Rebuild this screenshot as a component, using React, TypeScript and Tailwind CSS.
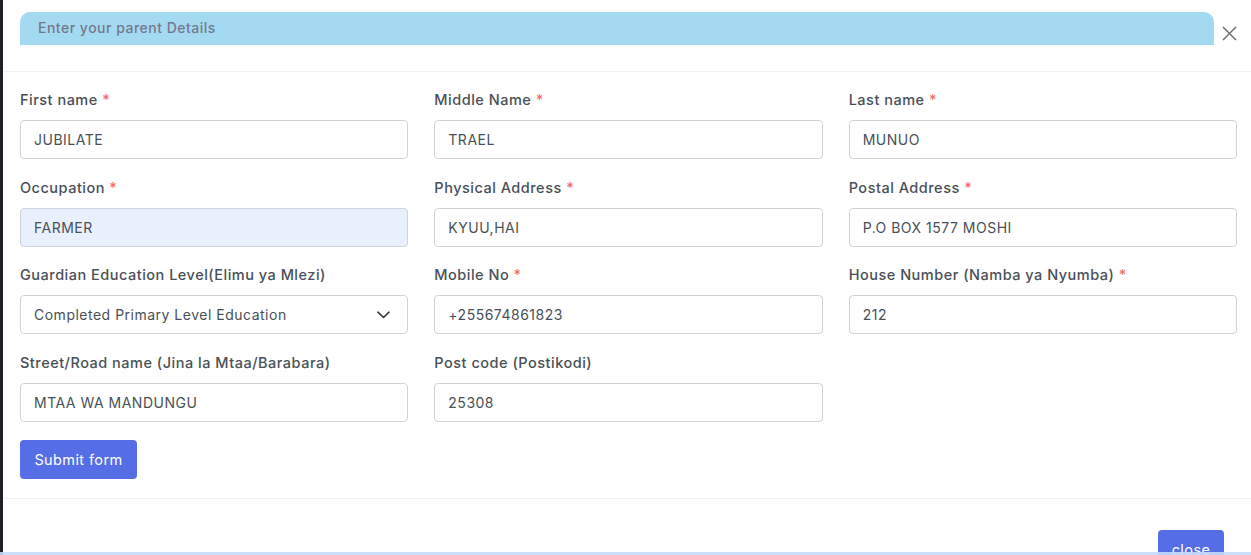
type Campo = {
  label: string;
  value: string;
  required?: boolean;
  select?: boolean;
  autofill?: boolean;
};

const campos: Campo[] = [
  { label: "First name", value: "JUBILATE", required: true },
  { label: "Middle Name", value: "TRAEL", required: true },
  { label: "Last name", value: "MUNUO", required: true },
  { label: "Occupation", value: "FARMER", required: true, autofill: true },
  { label: "Physical Address", value: "KYUU,HAI", required: true },
  { label: "Postal Address", value: "P.O BOX 1577 MOSHI", required: true },
  {
    label: "Guardian Education Level(Elimu ya Mlezi)",
    value: "Completed Primary Level Education",
    select: true,
  },
  { label: "Mobile No", value: "+255674861823", required: true },
  { label: "House Number (Namba ya Nyumba)", value: "212", required: true },
  { label: "Street/Road name (Jina la Mtaa/Barabara)", value: "MTAA WA MANDUNGU" },
  { label: "Post code (Postikodi)", value: "25308" },
];

function Field({ campo }: { campo: Campo }) {
  return (
    <div className="flex flex-col">
      <label className="h-[21px] mb-[10px] text-[14.5px] leading-[21px] tracking-[0.5px] font-medium text-[#495057]">
        {campo.label}
        {campo.required && <span className="text-[#f46a6a]"> *</span>}
      </label>
      <div
        className={`h-[39px] rounded-[4px] border border-[#ced4da] flex items-center justify-between pl-[13px] pr-[17px] text-[14px] tracking-[0.5px] text-[#495057] ${
          campo.autofill ? "bg-[#e8f0fe]" : "bg-white"
        }`}
      >
        <span>{campo.value}</span>
        {campo.select && (
          <svg width="13" height="8" viewBox="0 0 13 8" fill="none">
            <path d="M1 1.2l5.5 5.3L12 1.2" stroke="#343a40" strokeWidth="1.6" strokeLinecap="round" strokeLinejoin="round" />
          </svg>
        )}
      </div>
    </div>
  );
}

export default function App() {
  return (
    <main
      className="relative w-full h-[555px] overflow-hidden flex bg-[#1d2026]"
      style={{ fontFamily: "Inter, 'Noto Sans', sans-serif" }}
    >
      <div className="w-[3px] shrink-0" />

      <div className="flex-1 bg-white flex flex-col">
        <div className="h-[72px] shrink-0 flex items-start border-b border-[#eff2f7] pt-[12px] pl-[17px]">
          <div className="w-[1194px] h-[33px] bg-[#a4daf1] rounded-t-[10px] flex items-center pl-[18px] pb-[3px] text-[14px] tracking-[0.5px] font-medium text-[#74788d]">
            Enter your parent Details
          </div>
          <button type="button" className="ml-[8px] mt-[14px]">
            <svg width="15" height="15" viewBox="0 0 15 15" fill="none">
              <path d="M1 1l13 13M14 1L1 14" stroke="#707070" strokeWidth="1.5" />
            </svg>
          </button>
        </div>

        <div className="shrink-0 pt-[17px] pl-[17px] pr-[14px] pb-[19px] border-b border-[#eff2f7]">
          <div className="grid grid-cols-3 gap-x-[26px] gap-y-[17.7px]">
            {campos.map((campo) => (
              <Field key={campo.label} campo={campo} />
            ))}
          </div>

          <button
            type="button"
            className="mt-[18px] h-[39px] w-[117px] rounded-[4px] bg-[#556ee6] text-white text-[14.5px] tracking-[0.4px]"
          >
            Submit form
          </button>
        </div>

        <div className="shrink-0 flex justify-end pt-[31px] pr-[27px]">
          <button
            type="button"
            className="h-[39px] w-[66px] rounded-[4px] bg-[#556ee6] text-white text-[14.5px] tracking-[0.4px]"
          >
            close
          </button>
        </div>
      </div>

      <div className="absolute left-0 right-0 bottom-0 h-[3px] bg-[#c5dbf9]/90" />
    </main>
  );
}
